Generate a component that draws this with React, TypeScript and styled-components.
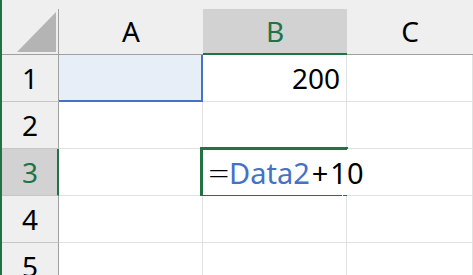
import * as React from "react"
import styled, { createGlobalStyle } from 'styled-components'

const GlobalStyle = createGlobalStyle`
    html, body {
        margin: 0;
        padding: 0;
        background: #ffffff;
        overflow: hidden;
    }
    body {
        font-family: "Noto Sans", "Liberation Sans", sans-serif;
    }
`

const GREEN = '#217346'
const BLUE = '#4472c4'
const GRID = '#e1e1e1'
const HEADER_BG = '#efefef'
const HEADER_ACTIVE = '#d2d2d2'

const Page = styled.div`
    display: flex;
    width: 473px;
    height: 275px;
    overflow: hidden;
    background: #ffffff;
`

const GreenEdge = styled.div`
    width: 2px;
    flex: none;
    background: ${GREEN};
`

const Sheet = styled.div`
    flex: 1;
    display: grid;
    grid-template-columns: 57px 144px 144px 1fr;
    grid-template-rows: 55px repeat(5, 47px);
    font-size: 28px;
    color: #000000;
`

const Corner = styled.div`
    background: ${HEADER_BG};
    display: flex;
    align-items: flex-end;
`

const CornerBox = styled.div`
    width: 100%;
    height: 46px;
    box-sizing: border-box;
    border-right: 1px solid #a0a0a0;
    border-bottom: 1px solid #a0a0a0;
    display: flex;
    align-items: flex-end;
    justify-content: flex-end;
    padding: 0 2px 2px 0;
`

const ColHeaderSlot = styled.div`
    background: ${HEADER_BG};
    display: flex;
    align-items: flex-end;
`

const ColHeader = styled.div<{ $active?: boolean }>`
    width: 100%;
    height: 46px;
    box-sizing: border-box;
    background: ${p => (p.$active ? HEADER_ACTIVE : HEADER_BG)};
    border-bottom: ${p => (p.$active ? `2px solid ${GREEN}` : '1px solid #a0a0a0')};
    color: ${p => (p.$active ? GREEN : '#000000')};
    display: flex;
    align-items: center;
    justify-content: center;
    padding-bottom: ${p => (p.$active ? '0' : '1px')};
`

const RowHeader = styled.div<{ $active?: boolean }>`
    box-sizing: border-box;
    background: ${p => (p.$active ? HEADER_ACTIVE : HEADER_BG)};
    border-right: ${p => (p.$active ? `2px solid ${GREEN}` : '1px solid #a0a0a0')};
    border-bottom: 1px solid #c6c6c6;
    color: ${p => (p.$active ? GREEN : '#000000')};
    display: flex;
    align-items: center;
    justify-content: center;
    padding-left: ${p => (p.$active ? '1px' : '0')};
`

const Cell = styled.div<{ $ref?: boolean; $right?: boolean }>`
    position: relative;
    box-sizing: border-box;
    background: ${p => (p.$ref ? '#e8eef8' : '#ffffff')};
    border-right: ${p => (p.$ref ? `2px solid ${BLUE}` : `1px solid ${GRID}`)};
    border-bottom: ${p => (p.$ref ? `2px solid ${BLUE}` : `1px solid ${GRID}`)};
    display: flex;
    align-items: center;
    justify-content: ${p => (p.$right ? 'flex-end' : 'flex-start')};
    padding: 0 6px 0 5px;
    white-space: nowrap;
`

// editor box of the active cell: open on the right where the text runs on
const ActiveFrame = styled.div`
    position: absolute;
    left: -3px;
    top: -2px;
    right: -2px;
    bottom: -3px;
    border: 3px solid ${GREEN};
    border-right: none;
    background: #ffffff;
    pointer-events: none;
`

const FillHandle = styled.div`
    position: absolute;
    right: -4px;
    bottom: -5px;
    width: 7px;
    height: 5px;
    background: ${GREEN};
    border-left: 1px solid #ffffff;
    border-top: 1px solid #ffffff;
`

const Formula = styled.span`
    position: relative;
    z-index: 1;
    font-size: 29px;
    display: flex;
    align-items: center;
`

const Equals = styled.span`
    display: inline-block;
    width: 21px;
    transform: scaleX(1.3);
    transform-origin: left center;
    font-weight: 300;
`

const Plus = styled.span`
    display: inline-block;
    margin: 0 2px;
`

const RefText = styled.span`
    color: ${BLUE};
`

const columns = ['A', 'B', 'C']
const rows = [1, 2, 3, 4, 5]

const App = () => {
    return (
        <Page>
            <GlobalStyle />
            <GreenEdge />
            <Sheet>
                <Corner>
                    <CornerBox>
                        <svg width="39" height="40" viewBox="0 0 39 40">
                            <polygon points="39,0 39,40 0,40" fill="#b4b4b4" />
                        </svg>
                    </CornerBox>
                </Corner>
                {columns.map(c => (
                    <ColHeaderSlot key={c}>
                        <ColHeader $active={c === 'B'}>{c}</ColHeader>
                    </ColHeaderSlot>
                ))}

                {rows.map(r => (
                    <React.Fragment key={r}>
                        <RowHeader $active={r === 3}>{r}</RowHeader>
                        <Cell $ref={r === 1} />
                        {r === 1 && <Cell $right>200</Cell>}
                        {r === 3 && (
                            <Cell>
                                <ActiveFrame />
                                <FillHandle />
                                <Formula>
                                    <Equals>=</Equals>
                                    <RefText>Data2</RefText>
                                    <Plus>+</Plus>
                                    10
                                </Formula>
                            </Cell>
                        )}
                        {r !== 1 && r !== 3 && <Cell />}
                        <Cell />
                    </React.Fragment>
                ))}
            </Sheet>
        </Page>
    )
}

export default App
